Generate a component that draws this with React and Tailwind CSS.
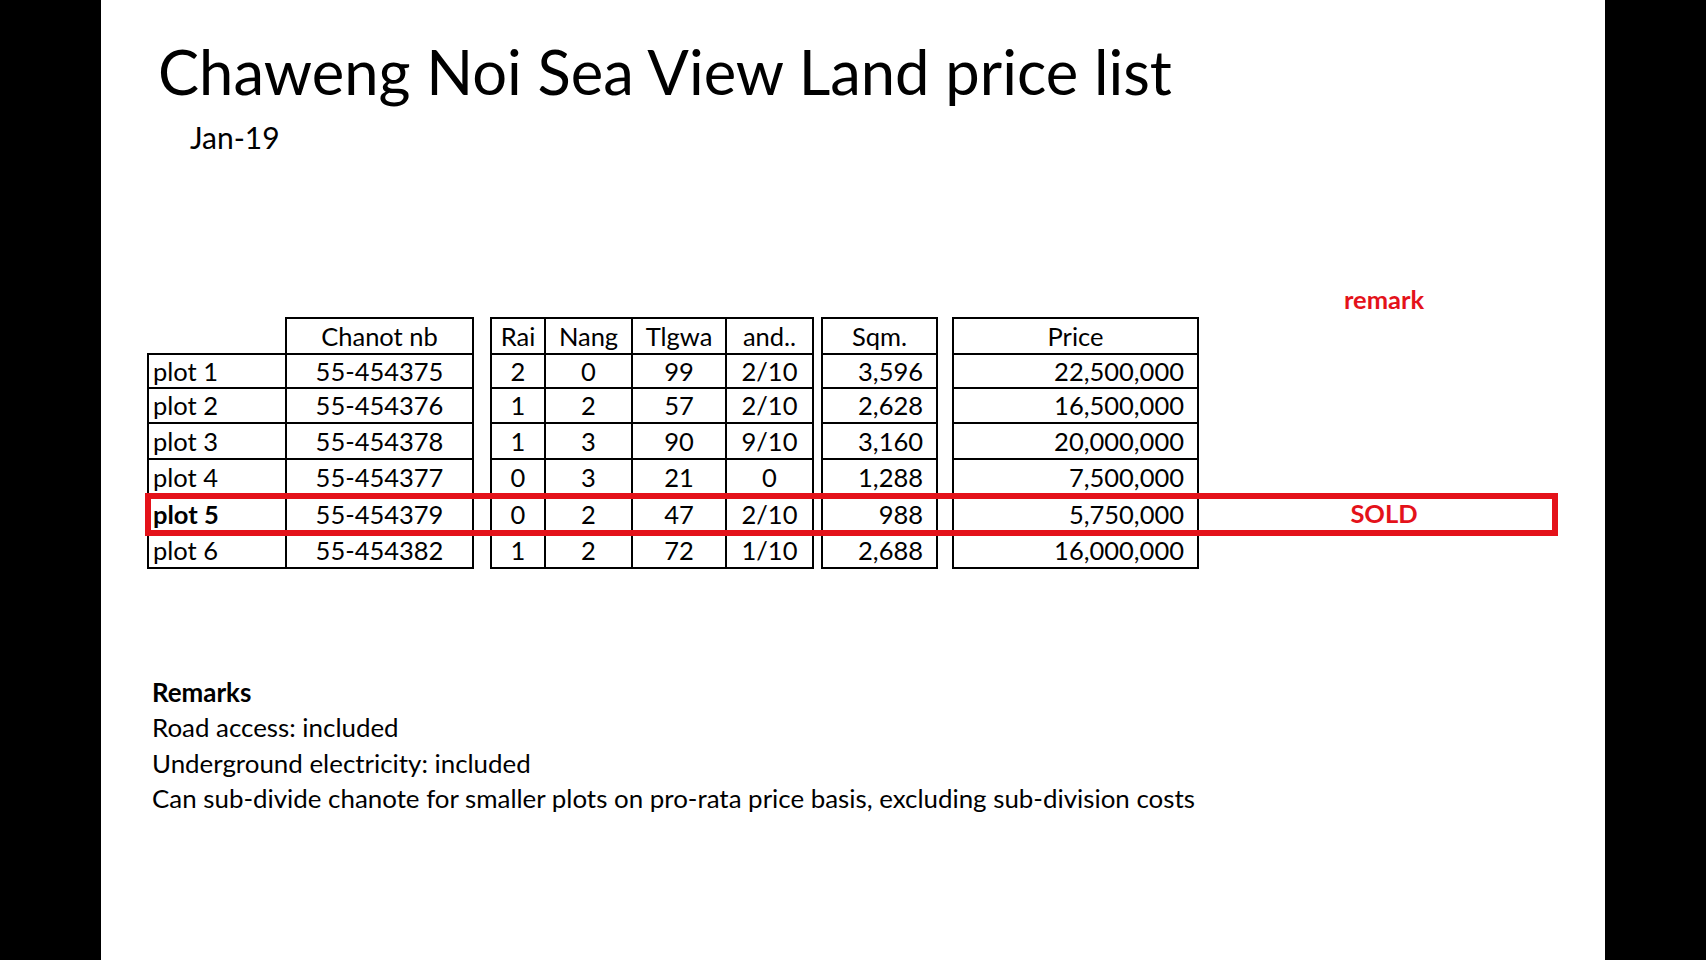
import React from "react";

const rows = [
  { h: "h-[34px]", d: ["plot 1", "55-454375", "2", "0", "99", "2/10", "3,596", "22,500,000"], r: "" },
  { h: "h-[35px]", d: ["plot 2", "55-454376", "1", "2", "57", "2/10", "2,628", "16,500,000"], r: "" },
  { h: "h-[36px]", d: ["plot 3", "55-454378", "1", "3", "90", "9/10", "3,160", "20,000,000"], r: "" },
  { h: "h-[36px]", d: ["plot 4", "55-454377", "0", "3", "21", "0", "1,288", "7,500,000"], r: "" },
  { h: "h-[38px]", d: ["plot 5", "55-454379", "0", "2", "47", "2/10", "988", "5,750,000"], r: "SOLD", bold: true },
  { h: "h-[37px]", d: ["plot 6", "55-454382", "1", "2", "72", "1/10", "2,688", "16,000,000"], r: "", last: true },
];

function Row({ row }) {
  const b = row.last ? " border-b-2" : "";
  const c = "flex items-center border-l-2 border-t-2 border-black" + b;
  return (
    <div className={"flex " + row.h}>
      <div className={c + " w-[138px] pl-[4px]" + (row.bold ? " font-bold" : "")}>{row.d[0]}</div>
      <div className={c + " border-r-2 w-[189px] justify-center"}>{row.d[1]}</div>
      <div className="w-[16px]" />
      <div className={c + " w-[54px] justify-center"}>{row.d[2]}</div>
      <div className={c + " w-[87px] justify-center"}>{row.d[3]}</div>
      <div className={c + " w-[94px] justify-center"}>{row.d[4]}</div>
      <div className={c + " border-r-2 w-[89px] justify-center"}>{row.d[5]}</div>
      <div className="w-[7px]" />
      <div className={c + " border-r-2 w-[117px] justify-end pr-[13px]"}>{row.d[6]}</div>
      <div className="w-[14px]" />
      <div className={c + " border-r-2 w-[247px] justify-end pr-[13px]"}>{row.d[7]}</div>
      <div className="flex w-[370px] items-center justify-center font-bold text-[#e4121a]">{row.r}</div>
    </div>
  );
}

export default function App() {
  const hc = "flex items-center justify-center border-l-2 border-t-2 border-black";
  return (
    <div className="flex h-[960px] w-[1706px] bg-black font-['Lato',sans-serif] text-black">
      <div className="ml-[101px] flex h-full w-[1504px] flex-col bg-white">
        <h1 className="pl-[57px] pt-[35px] text-[61.5px] font-normal leading-[1.2]">
          Chaweng Noi Sea View Land price list
        </h1>
        <div className="mt-[10px] pl-[89px] text-[30px] leading-[1.2]">Jan-19</div>

        <div className="relative ml-[46px] mt-[126px] text-[25.5px]">
          <div className="flex h-[36px]">
            <div className="w-[1052px]" />
            <div className="flex w-[370px] items-center justify-center font-bold text-[#e4121a]">remark</div>
          </div>
          <div className="flex h-[36px]">
            <div className="w-[138px]" />
            <div className={hc + " border-r-2 w-[189px]"}>Chanot nb</div>
            <div className="w-[16px]" />
            <div className={hc + " w-[54px]"}>Rai</div>
            <div className={hc + " w-[87px]"}>Nang</div>
            <div className={hc + " w-[94px]"}>Tlgwa</div>
            <div className={hc + " border-r-2 w-[89px]"}>and..</div>
            <div className="w-[7px]" />
            <div className={hc + " border-r-2 w-[117px]"}>Sqm.</div>
            <div className="w-[14px]" />
            <div className={hc + " border-r-2 w-[247px]"}>Price</div>
          </div>
          {rows.map((r, i) => (
            <Row key={i} row={r} />
          ))}
          <div className="pointer-events-none absolute left-[-2px] top-[212px] h-[43px] w-[1413px] border-[6px] border-[#e4121a]" />
        </div>

        <div className="ml-[51px] mt-[106px] text-[25.9px] leading-[35.5px]">
          <div className="font-bold">Remarks</div>
          <div>Road access: included</div>
          <div>Underground electricity: included</div>
          <div>Can sub-divide chanote for smaller plots on pro-rata price basis, excluding sub-division costs</div>
        </div>
      </div>
    </div>
  );
}
